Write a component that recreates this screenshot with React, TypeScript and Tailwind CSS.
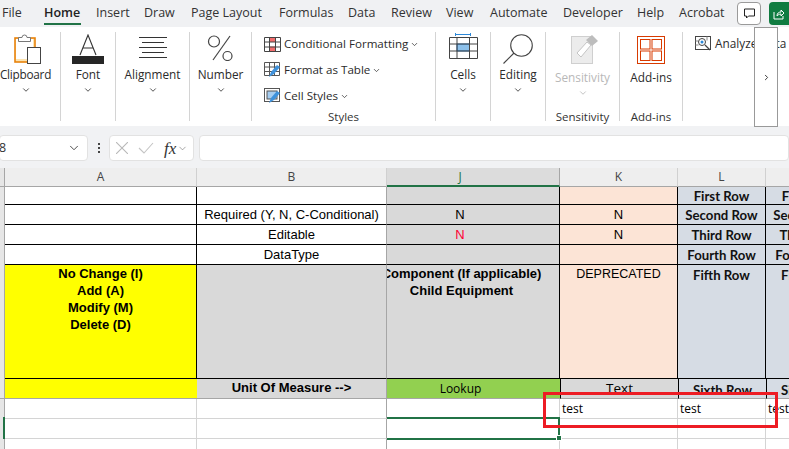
import React from "react";
import { ChevronDown, ChevronRight } from "lucide-react";

const tabs: [string, string][] = [
  ["File", "w-[42px]"], ["Home", "w-[52px]"], ["Insert", "w-[48px]"], ["Draw", "w-[47px]"],
  ["Page Layout", "w-[88px]"], ["Formulas", "w-[69px]"], ["Data", "w-[43px]"], ["Review", "w-[55px]"],
  ["View", "w-[44px]"], ["Automate", "w-[73px]"], ["Developer", "w-[74px]"], ["Help", "w-[42px]"], ["Acrobat", "w-[59px]"],
];

const ClipboardIcon = () => (
  <svg width="28" height="30" viewBox="0 0 28 30" fill="none">
    <rect x="1" y="4" width="20" height="24" fill="#fde3b0" stroke="#e8820c" strokeWidth="1.6" />
    <rect x="2" y="5" width="17" height="20" fill="#fff" />
    <path d="M4.5 7.5V3.5H8a2.5 2.5 0 0 1 5 0h3.5v4z" fill="#fff" stroke="#777" />
    <rect x="13.5" y="13.5" width="13" height="16" fill="#fff" stroke="#444" />
  </svg>
);
const FontIcon = () => (
  <svg width="32" height="30" viewBox="0 0 32 30" fill="none">
    <path d="M8 21L16 1l8 20M11 14h10" stroke="#333" strokeWidth="1.1" />
    <rect x="0" y="22" width="32" height="8" fill="#262626" />
  </svg>
);
const AlignIcon = () => (
  <svg width="30" height="22" viewBox="0 0 30 22" stroke="#333" strokeWidth="1">
    <path d="M1 .5h28M4 5.5h22M1 10.5h28M4 15.5h22M1 20.5h28" />
  </svg>
);
const PercentIcon = () => (
  <svg width="27" height="26" viewBox="0 0 27 26" fill="none" stroke="#444" strokeWidth="1.2">
    <circle cx="7" cy="6.5" r="5.5" />
    <circle cx="20.5" cy="21" r="4.5" />
    <path d="M23 1L6 25" />
  </svg>
);
const CondIcon = () => (
  <svg width="17" height="15" viewBox="0 0 17 15" fill="none">
    <rect x="5.5" y="0.5" width="6" height="4.5" fill="#f26d6d" />
    <rect x="5.5" y="9.5" width="6" height="5" fill="#f26d6d" />
    <path d="M.5.5h16v14H.5zM.5 5h16M.5 10h16M5.5.5v14M11.5.5v14" stroke="#444" />
  </svg>
);
const TableIcon = () => (
  <svg width="17" height="16" viewBox="0 0 17 16" fill="none">
    <path d="M.5.5h15v13H.5zM.5 5h15M.5 9.5h15M5.5.5v13M10.5.5v13" stroke="#555" />
    <path d="M5 15l2-5 6-7 3 2-6 7z" fill="#3f92dc" />
  </svg>
);
const StyleIcon = () => (
  <svg width="17" height="16" viewBox="0 0 17 16" fill="none">
    <rect x=".5" y=".5" width="15" height="13" fill="#fff" stroke="#555" />
    <rect x="3" y="3" width="10" height="8" fill="#a6cdf0" stroke="#555" />
    <path d="M5 15l2-5 6-7 3 2-6 7z" fill="#3f92dc" />
  </svg>
);
const CellsIcon = () => (
  <svg width="29" height="26" viewBox="0 0 29 26" fill="none">
    <path d="M6.5 1.5h15M6.5 0v3M21.5 0v3" stroke="#2b88d8" />
    <rect x="8" y="11" width="12.5" height="7" fill="#8cc0ea" stroke="#1e6fb8" />
    <path d="M.5 4.5h28v21H.5zM.5 11h28M.5 18h28M8 4.5v21M20.5 4.5v21" stroke="#444" />
  </svg>
);
const EditIcon = () => (
  <svg width="31" height="31" viewBox="0 0 31 31" fill="none" stroke="#444" strokeWidth="1.1">
    <circle cx="18.5" cy="11.5" r="10.8" />
    <path d="M11 19L.5 29.5" />
  </svg>
);
const SensIcon = () => (
  <svg width="28" height="29" viewBox="0 0 28 29" fill="none">
    <rect x=".5" y="1.5" width="21" height="27" fill="#ececec" stroke="#cfcfcf" />
    <path d="M6 18l10-11 4 3-10 12z" fill="#fff" stroke="#c4c4c4" />
    <path d="M15 5l6-5 6 6-6 5z" fill="#bdbdbd" />
  </svg>
);
const AddIcon = () => (
  <svg width="28" height="28" viewBox="0 0 28 28" fill="none" stroke="#d83b01" strokeWidth="1">
    <rect x=".5" y=".5" width="27" height="27" />
    <rect x="3.5" y="3.5" width="9.5" height="9.5" />
    <rect x="15" y="3.5" width="9.5" height="9.5" />
    <rect x="3.5" y="15" width="9.5" height="9.5" />
    <rect x="15" y="15" width="9.5" height="9.5" />
  </svg>
);
const AnalyzeIcon = () => (
  <svg width="16" height="16" viewBox="0 0 16 16" fill="none">
    <rect x=".5" y=".5" width="15" height="13" stroke="#444" />
    <path d="M.5 5h3M.5 9h3M12 .5v4" stroke="#888" />
    <circle cx="7" cy="6" r="3.5" stroke="#444" fill="#fff" />
    <circle cx="7" cy="6" r="1.5" fill="#2b88d8" />
    <path d="M10 9l5 5" stroke="#444" strokeWidth="1.3" />
  </svg>
);

function Big({ w, label, icon, top, shift, dim, footer }: { w: string; label: string; icon: React.ReactNode; top: string; shift?: string; dim?: boolean; footer?: string }) {
  return (
    <div className={`${w} shrink-0 h-[89px] flex flex-col items-center border-r border-[#d4d4d4]`}>
      <div className={`h-[34px] flex items-start justify-center ${top}`}>{icon}</div>
      <div className={`${footer ? "mt-[3px]" : ""} ${shift ?? ""} text-[11.8px] leading-[16px] whitespace-nowrap ${dim ? "text-[#b8b8b8]" : "text-[#2b2b2b]"}`}>{label}</div>
      {dim ? <ChevronDown size={10} strokeWidth={2} className="mt-[3px] text-[#b8b8b8]" /> : null}
      {!dim && !footer ? <ChevronDown size={10} strokeWidth={2} className={`${shift ?? ""} mt-[3px] text-[#333]`} /> : null}
      {footer ? <div className="mt-auto mb-[-3px] text-[11.5px] leading-[14px] text-[#333]">{footer}</div> : null}
    </div>
  );
}

function StyleRow({ icon, label }: { icon: React.ReactNode; label: string }) {
  return (
    <div className="h-[26px] flex items-center gap-[2px] text-[11.6px] text-[#2b2b2b] whitespace-nowrap">
      <div className="w-[18px] shrink-0">{icon}</div>
      <span>{label}</span>
      <ChevronDown size={9} strokeWidth={2} className="text-[#333]" />
    </div>
  );
}

type Cell = { t?: React.ReactNode; c: string };
const BK = "border-r border-b border-black";
const BN = "border-b border-black";
const sans = "font-['Liberation_Sans',sans-serif] text-[13px] text-black";
const bold = "font-['Liberation_Sans',sans-serif] text-[13px] font-bold text-black";
const rowLbl = "font-['Lato',sans-serif] text-[13.2px] font-bold text-[#111] pt-[3px]";
const rowLblTop = "font-['Lato',sans-serif] text-[13.2px] font-bold text-[#111]";
const GR = "border-r border-b border-[#d4d4d4]";

const Label = (s: string) => <span className="whitespace-nowrap">{s}</span>;

const body: Cell[][] = [
  [
    { c: `bg-white ${BK}` }, { c: `bg-white ${BN} border-r border-r-[#a6a6a6]` },
    { c: `bg-[#d9d9d9] ${BK}` }, { c: `bg-[#fce4d6] ${BK}` },
    { c: `bg-[#d6dce4] ${BK} ${rowLbl}`, t: Label("First Row") }, { c: `bg-[#d6dce4] ${BK} ${rowLbl}`, t: Label("First Row") },
  ],
  [
    { c: `bg-white ${BK}` }, { c: `bg-white ${BN} border-r border-r-[#a6a6a6] ${sans}`, t: Label("Required (Y, N, C-Conditional)") },
    { c: `bg-[#d9d9d9] ${BK} ${sans} text-[#1f1140] pr-[26px]`, t: "N" }, { c: `bg-[#fce4d6] ${BK} ${sans}`, t: "N" },
    { c: `bg-[#d6dce4] ${BK} ${rowLbl}`, t: Label("Second Row") }, { c: `bg-[#d6dce4] ${BK} ${rowLbl}`, t: Label("Second Row") },
  ],
  [
    { c: `bg-white ${BK}` }, { c: `bg-white ${BN} border-r border-r-[#a6a6a6] ${sans}`, t: "Editable" },
    { c: `bg-[#d9d9d9] ${BK} font-['Liberation_Sans',sans-serif] text-[13px] text-[#ff0033] pr-[26px]`, t: "N" }, { c: `bg-[#fce4d6] ${BK} ${sans}`, t: "N" },
    { c: `bg-[#d6dce4] ${BK} ${rowLbl}`, t: Label("Third Row") }, { c: `bg-[#d6dce4] ${BK} ${rowLbl}`, t: Label("Third Row") },
  ],
  [
    { c: `bg-white ${BK}` }, { c: `bg-white ${BN} border-r border-r-[#a6a6a6] ${sans}`, t: "DataType" },
    { c: `bg-[#d9d9d9] ${BK}` }, { c: `bg-[#fce4d6] ${BK}` },
    { c: `bg-[#d6dce4] ${BK} ${rowLbl}`, t: Label("Fourth Row") }, { c: `bg-[#d6dce4] ${BK} ${rowLbl}`, t: Label("Fourth Row") },
  ],
];

function CellBox({ cell }: { cell: Cell }) {
  return (
    <div className={`${cell.c} overflow-hidden flex items-center justify-center min-w-0`}>{cell.t}</div>
  );
}

const Hdr = ({ label, sel }: { label: string; sel?: boolean }) => (
  <div className={`flex items-center justify-center text-[12px] font-['Open_Sans',sans-serif] border-r ${sel ? "pr-[26px] bg-[#dcdcdc] border-[#a6a6a6] border-b-2 border-b-[#217346] text-[#217346]" : "bg-[#eeeeee] border-[#d0d0d0] border-b border-b-[#a6a6a6] text-[#444]"}`}>
    {label}
  </div>
);

const plain = "bg-white border-r border-b border-[#d4d4d4]";
const testCell = "bg-white border-r border-b border-[#d4d4d4] font-['Open_Sans',sans-serif] text-[12px] text-black pl-[2px] flex items-center whitespace-nowrap";

export default function App() {
  return (
    <div className="relative w-[789px] h-[449px] overflow-hidden bg-[#f3f3f3] font-['Open_Sans',sans-serif]">
      {/* Tabs */}
      <div className="h-[27px] bg-[#f0f1f3] flex items-center pl-[2px] text-[12.5px] text-[#333] whitespace-nowrap">
        {tabs.map(([t, w]) => (
          <div key={t} className={`${w} shrink-0 relative h-[27px] leading-[25px] ${t === "Home" ? "font-semibold text-[#222]" : ""}`}>
            {t}
            {t === "Home" ? <div className="absolute left-0 bottom-[2px] w-[37px] h-[2px] bg-[#217346]" /> : null}
          </div>
        ))}
        <div className="w-[24px] h-[23px] shrink-0 rounded-[4px] bg-white border border-[#9a9a9a] flex items-center justify-center ml-[-1px]">
          <svg width="11" height="11" viewBox="0 0 11 11" fill="none" stroke="#222"><path d="M.5 1h10v7H4.5L2.5 10V8H.5z" /></svg>
        </div>
        <div className="ml-[8px] w-[30px] h-[23px] shrink-0 rounded-[4px] bg-[#107c41] flex items-center pl-[4px]">
          <svg width="12" height="12" viewBox="0 0 12 12" fill="none" stroke="#fff"><path d="M1 4v7h9V8M4 8c0-3 2-4 4-4V2l3 3-3 3V6C6 6 5 7 4 8z" /></svg>
        </div>
      </div>

      {/* Ribbon */}
      <div className="h-[99px] bg-white flex pt-[5px] overflow-hidden">
        <Big w="w-[61px]" label="Clipboard" icon={<ClipboardIcon />} top="pt-[2px] pr-[5px]" shift="mr-[9px] tracking-[-0.25px]" />
        <Big w="w-[55px]" label="Font" icon={<FontIcon />} top="pt-[2px]" />
        <Big w="w-[74px]" label="Alignment" icon={<AlignIcon />} top="pt-[5px]" />
        <Big w="w-[62px]" label="Number" icon={<PercentIcon />} top="pt-[3px]" />
        <div className="w-[184px] shrink-0 h-[89px] flex flex-col items-start pl-[12px] border-r border-[#d4d4d4]">
          <div className="mt-[-1px]">
            <StyleRow icon={<CondIcon />} label="Conditional Formatting" />
            <StyleRow icon={<TableIcon />} label="Format as Table" />
            <StyleRow icon={<StyleIcon />} label="Cell Styles" />
          </div>
          <div className="self-center mt-auto mb-[-3px] text-[11.5px] leading-[14px] text-[#333] pr-[12px]">Styles</div>
        </div>
        <Big w="w-[55px]" label="Cells" icon={<CellsIcon />} top="pt-[1px]" />
        <Big w="w-[55px]" label="Editing" icon={<EditIcon />} top="pt-[2px]" />
        <Big w="w-[74px]" label="Sensitivity" icon={<SensIcon />} top="pt-[3px] pl-[5px]" dim footer="Sensitivity" />
        <Big w="w-[63px]" label="Add-ins" icon={<AddIcon />} top="pt-[4px]" footer="Add-ins" />
        <div className="pl-[12px] h-[26px] mt-[-1px] flex items-center gap-[4px] text-[11.8px] text-[#2b2b2b] whitespace-nowrap">
          <AnalyzeIcon /><span>Analyze Data</span>
        </div>
      </div>

      {/* Ribbon scroll button */}
      <div className="absolute left-[754px] top-[27px] w-[24px] h-[100px] bg-white border border-[#999] flex items-center justify-center">
        <ChevronRight size={9} strokeWidth={2.5} className="text-[#333]" />
      </div>

      {/* Formula bar */}
      <div className="h-[42px] pt-[9px] flex items-start bg-[#f1f2f4]">
        <div className="w-[89px] h-[26px] shrink-0 ml-[-1px] bg-white rounded-[4px] border border-[#e2e2e2] flex items-center justify-between pr-[6px] overflow-hidden">
          <span className="text-[12.5px] text-[#333] ml-[-1px] font-['Open_Sans',sans-serif]">8</span>
          <ChevronDown size={14} strokeWidth={1.6} className="text-[#444]" />
        </div>
        <div className="w-[21px] h-[26px] shrink-0 flex flex-col items-center justify-center gap-[2px]">
          <i className="w-[2px] h-[2px] bg-[#444]" /><i className="w-[2px] h-[2px] bg-[#444]" /><i className="w-[2px] h-[2px] bg-[#444]" />
        </div>
        <div className="w-[85px] h-[26px] shrink-0 bg-white rounded-[4px] border border-[#e2e2e2] flex items-center pl-[6px]">
          <svg width="12" height="12" viewBox="0 0 12 12" stroke="#b8b8b8" strokeWidth="1.1"><path d="M0 0l12 12M12 0L0 12" /></svg>
          <svg className="ml-[10px]" width="16" height="12" viewBox="0 0 16 12" fill="none" stroke="#c4c4c4" strokeWidth="1.1"><path d="M1 6l5 5L15 1" /></svg>
          <span className="ml-[10px] font-['Liberation_Serif',serif] italic text-[17px] text-[#333] leading-none">fx</span>
          <ChevronDown size={11} strokeWidth={1.4} className="ml-[1px] text-[#777]" />
        </div>
        <div className="ml-[5px] flex-1 h-[26px] bg-white rounded-[4px] border border-[#e2e2e2]" />
      </div>

      {/* Sheet */}
      <div className="grid grid-cols-[5px_192px_190px_173px_118px_88px_88px] grid-rows-[19px_18px_20px_20px_20px_114px_20px_20px_20px_20px]">
        <div className="bg-[#e6e6e6] border-r border-b border-[#a6a6a6]" />
        <Hdr label="A" /><Hdr label="B" /><Hdr label="J" sel /><Hdr label="K" /><Hdr label="L" /><Hdr label="" />

        {body.map((r, i) => (
          <React.Fragment key={i}>
            <div className="bg-[#e6e6e6] border-r border-[#a6a6a6]" />
            {r.map((c, j) => <CellBox key={j} cell={c} />)}
          </React.Fragment>
        ))}

        {/* Row 5 */}
        <div className="bg-[#e6e6e6] border-r border-[#a6a6a6]" />
        <div className={`bg-[#ffff00] ${BK} ${bold} text-center leading-[17px]`}>
          <div>No Change (I)</div><div>Add (A)</div><div>Modify (M)</div><div>Delete (D)</div>
        </div>
        <div className={`bg-[#d9d9d9] ${BN} border-r border-r-[#a6a6a6]`} />
        <div className={`bg-[#d9d9d9] ${BK} ${bold} leading-[17px] overflow-hidden flex justify-start`}>
          <div className="w-[149px] shrink-0 flex flex-col items-center">
            <div className="whitespace-nowrap">Component (If applicable)</div><div className="whitespace-nowrap">Child Equipment</div>
          </div>
        </div>
        <div className={`bg-[#fce4d6] ${BK} font-['Liberation_Sans',sans-serif] text-[12.5px] text-black text-center pt-[1px] leading-[17px]`}>DEPRECATED</div>
        <div className={`bg-[#d6dce4] ${BK} ${rowLblTop} text-center pt-[2px] leading-[17px]`}>Fifth Row</div>
        <div className={`bg-[#d6dce4] ${BK} ${rowLblTop} text-center pt-[2px] leading-[17px]`}>Fifth Row</div>

        {/* Row 6 */}
        <div className="bg-[#e6e6e6] border-r border-b border-[#a6a6a6]" />
        <div className="bg-[#ffff00] border-b border-[#a6a6a6]" />
        <div className={`bg-[#d9d9d9] border-b border-r border-[#a6a6a6] ${bold} text-center pt-[1px] leading-[16px]`}>Unit Of Measure --&gt;</div>
        <div className="bg-[#92d050] border-b border-[#a6a6a6] font-['Open_Sans',sans-serif] text-[12px] text-black text-center pr-[26px] leading-[20px]">Lookup</div>
        <div className="bg-[#d9d9d9] border-b border-[#a6a6a6] border-l border-l-black font-['Open_Sans',sans-serif] font-medium text-[13.5px] text-black text-center leading-[18px]">Text</div>
        <div className={`bg-[#d6dce4] border-b border-[#a6a6a6] border-l border-l-black ${rowLblTop} text-center leading-[22px] whitespace-nowrap overflow-hidden`}>Sixth Row</div>
        <div className={`bg-[#d6dce4] border-b border-[#a6a6a6] border-l border-l-black ${rowLblTop} text-center leading-[22px] whitespace-nowrap overflow-hidden`}>Sixth Row</div>

        {/* Row 7 */}
        <div className="bg-[#e6e6e6] border-r border-[#a6a6a6]" />
        <div className={plain} /><div className={`${GR} border-r-[#a6a6a6] bg-white`} /><div className={plain} />
        <div className={testCell}>test</div><div className={testCell}>test</div><div className={testCell}>test</div>

        {/* Row 8 */}
        <div className="bg-[#e6e6e6] border-r-2 border-[#217346] mt-[-2px]" />
        <div className={plain} /><div className={`${GR} border-r-[#a6a6a6] bg-white`} />
        <div className="bg-white border-2 border-l-0 border-[#217346] relative mt-[-2px] mb-[-1px]">
          <div className="absolute right-[-4px] bottom-[-3px] w-[6px] h-[6px] bg-[#217346] border border-white" />
        </div>
        <div className={plain} /><div className={plain} /><div className={plain} />

        {/* Row 9 */}
        <div className="bg-[#e6e6e6] border-r border-[#a6a6a6]" />
        <div className={plain} /><div className={`${GR} border-r-[#a6a6a6] bg-white`} /><div className={plain} />
        <div className={plain} /><div className={plain} /><div className={plain} />
      </div>

      {/* Red annotation */}
      <div className="absolute left-[543px] top-[392px] w-[235px] h-[36px] border-[3px] border-[#ed1c24]" />
    </div>
  );
}
